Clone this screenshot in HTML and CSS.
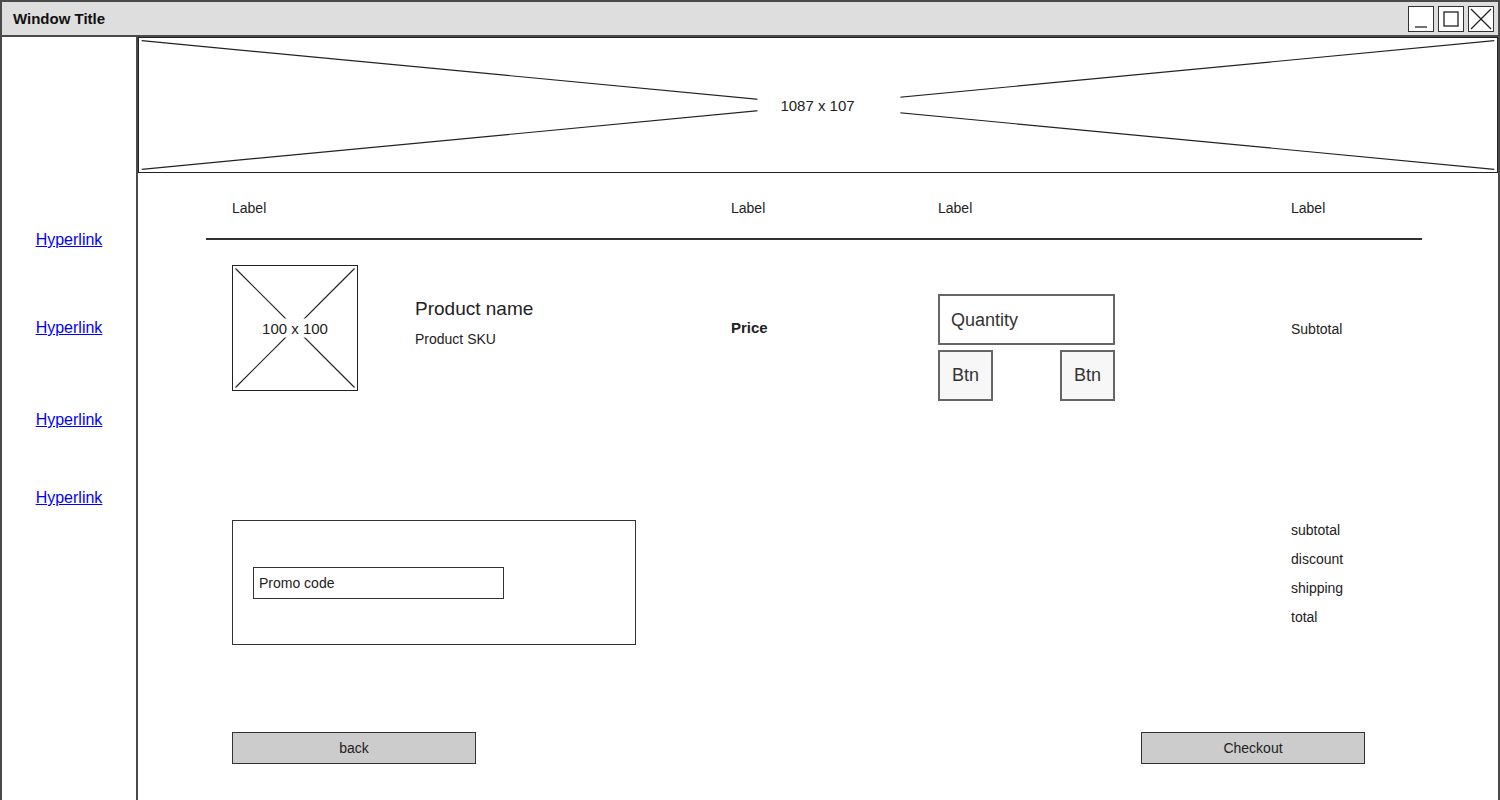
FILE: index.html
```html
<!DOCTYPE html>
<html lang="en">

<head>
    <meta charset="UTF-8">
    <meta name="viewport" content="width=device-width, initial-scale=1.0">
    <title>Shopping cart - wireframe</title>
    <link rel="stylesheet" href="styles.css">
</head>

<body>
    <div class="window">
        <div class="titlebar">
            <span class="title">Window Title</span>
            <div class="win-buttons">
                <span class="win-btn">
                    <svg viewBox="0 0 24 24"><line x1="6" y1="20" x2="18" y2="20" /></svg>
                </span>
                <span class="win-btn">
                    <svg viewBox="0 0 24 24"><rect x="5" y="5" width="14" height="14" /></svg>
                </span>
                <span class="win-btn">
                    <svg viewBox="0 0 24 24"><line x1="2" y1="2" x2="22" y2="22" /><line x1="22" y1="2" x2="2" y2="22" /></svg>
                </span>
            </div>
        </div>

        <div class="main">
            <nav class="sidebar">
                <a href="#">Hyperlink</a>
                <a href="#">Hyperlink</a>
                <a href="#">Hyperlink</a>
                <a href="#">Hyperlink</a>
            </nav>

            <div class="content">
                <div class="placeholder banner">
                    <svg viewBox="0 0 100 100" preserveAspectRatio="none">
                        <line x1="0.2" y1="2" x2="99.8" y2="98" />
                        <line x1="0.2" y1="98" x2="99.8" y2="2" />
                    </svg>
                    <span class="ph-label">1087 x 107</span>
                </div>

                <div class="cart">
                    <div class="cart-row cart-head">
                        <span>Label</span>
                        <span>Label</span>
                        <span>Label</span>
                        <span>Label</span>
                    </div>

                    <div class="cart-row cart-item">
                        <div class="item-product">
                            <div class="placeholder thumb">
                                <svg viewBox="0 0 100 100" preserveAspectRatio="none">
                                    <line x1="2" y1="2" x2="98" y2="98" />
                                    <line x1="2" y1="98" x2="98" y2="2" />
                                </svg>
                                <span class="ph-label">100 x 100</span>
                            </div>
                            <div class="item-info">
                                <h4>Product name</h4>
                                <p>Product SKU</p>
                            </div>
                        </div>
                        <div class="item-price">Price</div>
                        <div class="item-qty">
                            <div class="qty-field">Quantity</div>
                            <div class="qty-buttons">
                                <button>Btn</button>
                                <button>Btn</button>
                            </div>
                        </div>
                        <div class="item-subtotal">Subtotal</div>
                    </div>

                    <div class="cart-row cart-summary">
                        <div class="promo">
                            <div class="promo-input">Promo code</div>
                        </div>
                        <div></div>
                        <div></div>
                        <ul class="totals">
                            <li>subtotal</li>
                            <li>discount</li>
                            <li>shipping</li>
                            <li>total</li>
                        </ul>
                    </div>

                    <div class="cart-actions">
                        <button class="btn-back">back</button>
                        <button class="btn-checkout">Checkout</button>
                    </div>
                </div>
            </div>
        </div>
    </div>
</body>

</html>
```

FILE: styles.css
```css
* {
    padding: 0;
    margin: 0;
    box-sizing: border-box;
}

body {
    font-family: "Comic Sans MS", "Liberation Sans", sans-serif;
    color: #222;
    background-color: white;
    overflow: hidden;
}

.window {
    height: 800px;
    border: 2px solid #4a4a4a;
    border-bottom: none;
    display: flex;
    flex-direction: column;
}

/* title bar */
.titlebar {
    height: 35px;
    background-color: #dedede;
    border-bottom: 2px solid #4a4a4a;
    display: flex;
    align-items: center;
    justify-content: space-between;
    padding: 0 4px 0 11px;
}

.title {
    font-size: 15px;
    font-weight: bold;
    color: #111;
}

.win-buttons {
    display: flex;
    gap: 4px;
}

.win-btn {
    width: 26px;
    height: 26px;
    border: 1px solid #333;
    background-color: white;
    display: flex;
}

.win-btn svg {
    width: 24px;
    height: 24px;
    fill: none;
    stroke: #222;
    stroke-width: 1.3;
}

.main {
    flex: 1;
    display: flex;
}

/* sidebar */
.sidebar {
    width: 136px;
    border-right: 2px solid #4a4a4a;
    display: flex;
    flex-direction: column;
    align-items: center;
    padding-top: 194px;
}

.sidebar a {
    font-family: "Liberation Sans", Arial, sans-serif;
    font-size: 16px;
    line-height: 18px;
    color: #0000ff;
}

.sidebar a:nth-child(2) {
    margin-top: 70px;
}

.sidebar a:nth-child(3) {
    margin-top: 74px;
}

.sidebar a:nth-child(4) {
    margin-top: 60px;
}

.content {
    flex: 1;
}

/* placeholders with crossed lines */
.placeholder {
    position: relative;
    border: 1px solid #222;
}

.placeholder svg {
    width: 100%;
    height: 100%;
    display: block;
}

.placeholder line {
    stroke: #222;
    stroke-width: 1.2;
    vector-effect: non-scaling-stroke;
}

.ph-label {
    position: absolute;
    top: 50%;
    left: 50%;
    transform: translate(-50%, -50%);
    background-color: white;
    font-family: "Liberation Sans", Arial, sans-serif;
    font-size: 15px;
    white-space: nowrap;
}

.banner {
    height: 136px;
}

/* the label box is wider on the right side */
.banner .ph-label {
    padding: 7px 46px 7px 23px;
    transform: translate(calc(-50% + 11px), -50%);
}

.thumb {
    width: 126px;
    height: 126px;
    flex-shrink: 0;
}

.thumb .ph-label {
    padding: 1px 0;
}

/* cart table */
.cart {
    margin: 0 76px 0 68px;
}

.cart-row {
    display: grid;
    grid-template-columns: 499px 207px 353px 1fr;
    padding-left: 26px;
}

.cart-head {
    padding-top: 26px;
    padding-bottom: 21px;
    border-bottom: 2px solid #333;
    font-size: 14px;
    line-height: 18px;
}

.cart-item {
    padding-top: 25px;
}

.item-product {
    display: flex;
    gap: 57px;
}

.item-info {
    padding-top: 32px;
}

.item-info h4 {
    font-size: 19px;
    line-height: 24px;
    font-weight: normal;
}

.item-info p {
    margin-top: 9px;
    font-size: 14px;
    line-height: 18px;
}

.item-price {
    padding-top: 53px;
    font-size: 15px;
    line-height: 20px;
    font-weight: bold;
}

.item-qty {
    padding-top: 29px;
    width: 177px;
}

.qty-field {
    height: 51px;
    border: 2px solid #666;
    display: flex;
    align-items: center;
    padding: 2px 0 0 11px;
    font-family: "Liberation Sans", Arial, sans-serif;
    font-size: 18px;
    color: #333;
}

.qty-buttons {
    display: flex;
    justify-content: space-between;
    margin-top: 5px;
}

.qty-buttons button {
    width: 55px;
    height: 51px;
    border: 2px solid #666;
    background-color: #f7f7f7;
    font-family: "Liberation Sans", Arial, sans-serif;
    font-size: 18px;
    color: #333;
}

.item-subtotal {
    padding-top: 55px;
    font-size: 14px;
    line-height: 18px;
}

.cart-summary {
    padding-top: 115px;
}

.promo {
    margin-top: 4px;
    width: 404px;
    height: 125px;
    border: 1px solid #333;
    padding: 46px 0 0 20px;
}

.promo-input {
    width: 251px;
    height: 32px;
    border: 1px solid #333;
    display: flex;
    align-items: center;
    padding-left: 5px;
    font-size: 14px;
}

.totals {
    list-style: none;
    font-size: 14px;
    line-height: 29px;
}

/* bottom buttons */
.cart-actions {
    display: flex;
    justify-content: space-between;
    padding: 0 57px 0 26px;
    margin-top: 87px;
}

.cart-actions button {
    height: 32px;
    background-color: #cccccc;
    border: 1px solid #333;
    font-family: "Comic Sans MS", "Liberation Sans", sans-serif;
    font-size: 14px;
    color: #222;
}

.btn-back {
    width: 244px;
}

.btn-checkout {
    width: 224px;
}
```
